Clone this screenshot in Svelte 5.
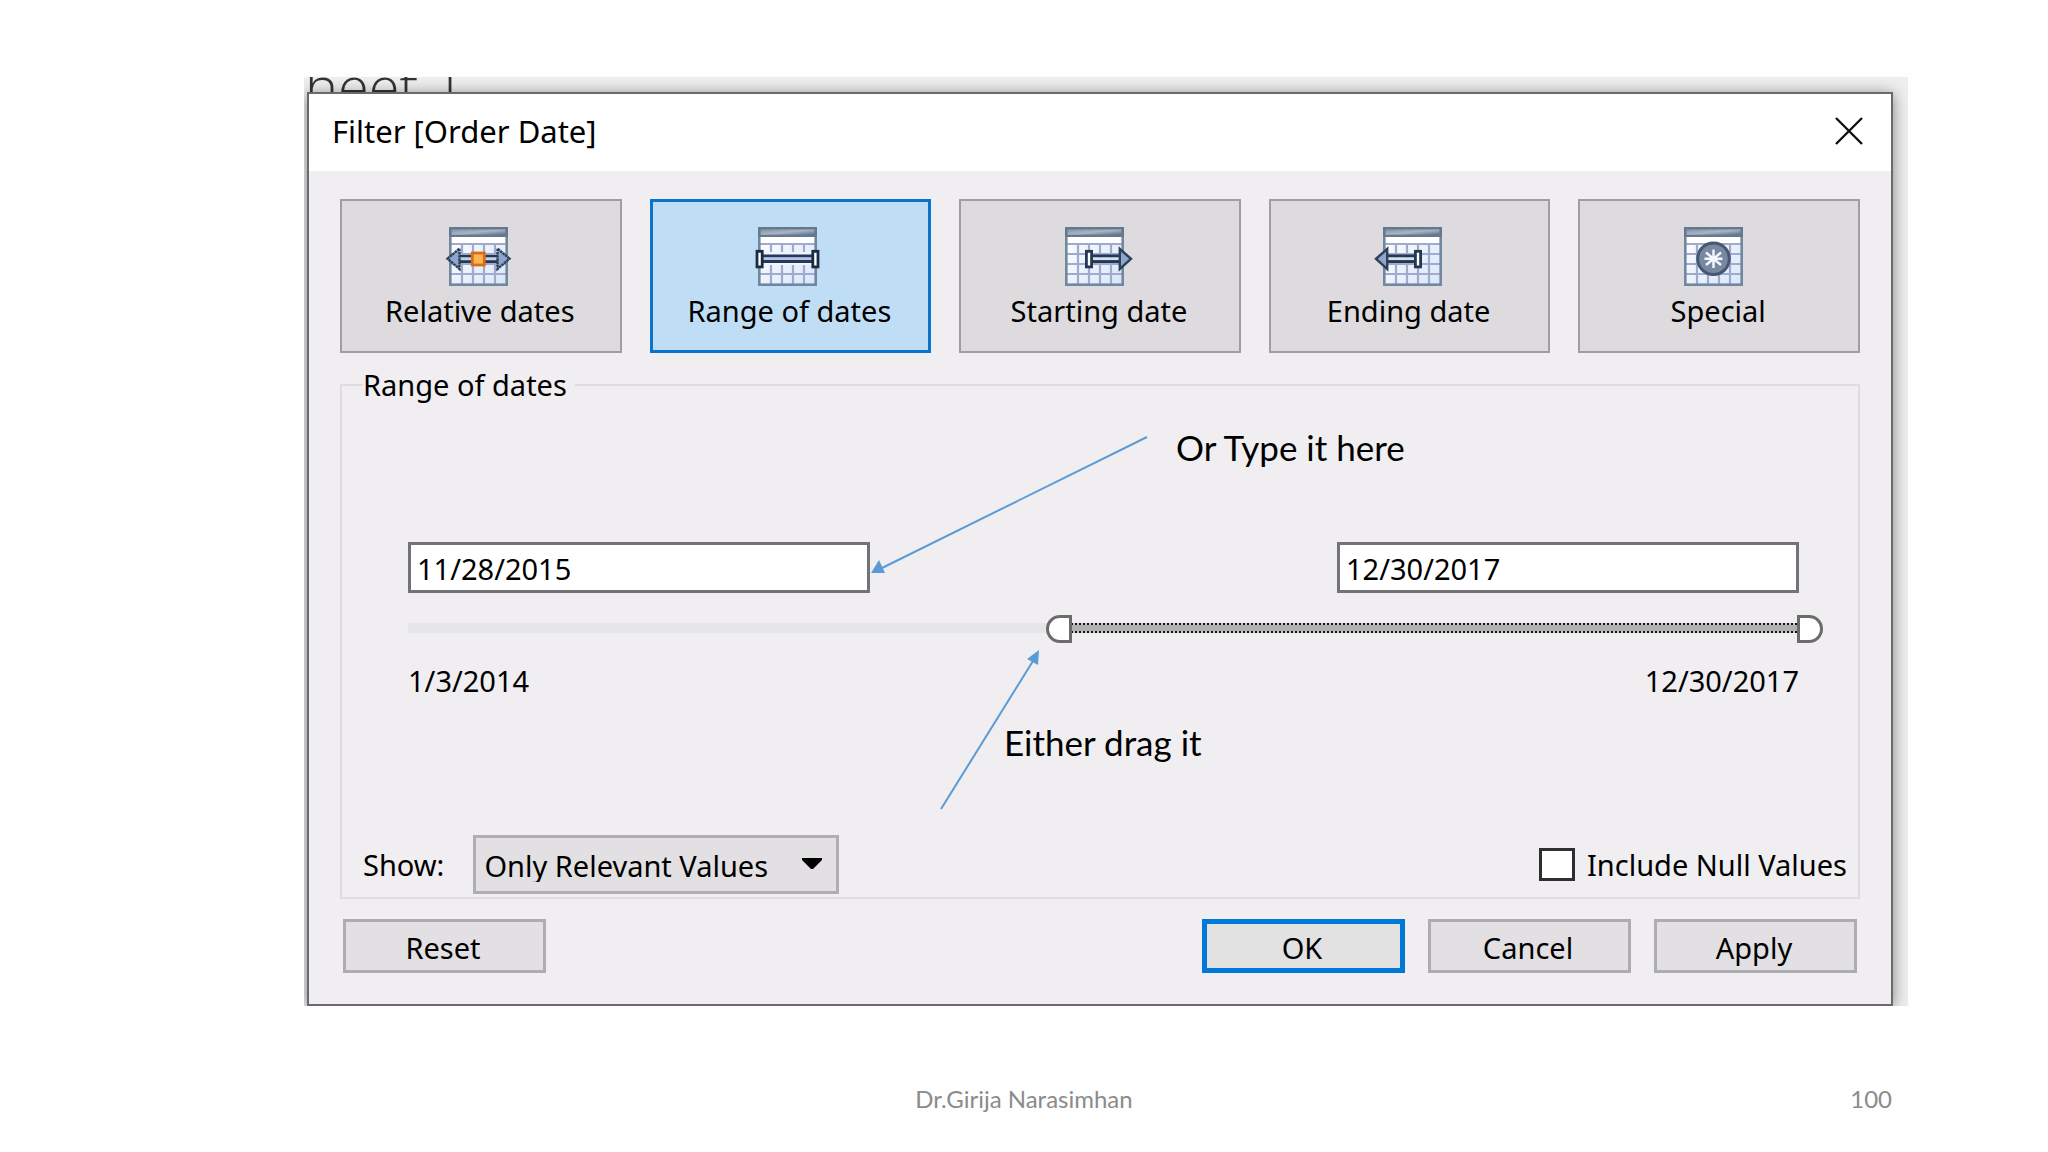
<script>
  const modes = [
    { id: "relative", label: "Relative dates", grid: 3 },
    { id: "range", label: "Range of dates", grid: 3 },
    { id: "starting", label: "Starting date", grid: 0 },
    { id: "ending", label: "Ending date", grid: 8 },
    { id: "special", label: "Special", grid: 0 },
  ];

  const DAY = 24 * 60 * 60 * 1000;
  const first = Date.UTC(2014, 0, 3);
  const span = (Date.UTC(2017, 11, 30) - first) / DAY;

  let mode = "range";
  let low = (Date.UTC(2015, 10, 28) - first) / DAY;
  let high = span;
  let show = "relevant";
  let includeNull = false;

  function format(days) {
    const d = new Date(first + days * DAY);
    return `${d.getUTCMonth() + 1}/${d.getUTCDate()}/${d.getUTCFullYear()}`;
  }

  function parse(text, fallback) {
    const [m, d, y] = text.split("/").map(Number);
    const days = (Date.UTC(y, m - 1, d) - first) / DAY;
    return days >= 0 && days <= span ? days : fallback;
  }

  function reset() {
    low = 0;
    high = span;
  }
</script>

<div class="slide">
  <div class="backdrop">
    <div class="sheet-title">heet 1</div>

    <div class="dialog" role="dialog" aria-labelledby="dialog-title">
      <header>
        <h1 id="dialog-title">Filter [Order Date]</h1>
        <button class="close" aria-label="Close">
          <svg width="30" height="28" viewBox="0 0 30 28">
            <path d="M2 1L28 27M28 1L2 27" stroke="#111" stroke-width="2.4" />
          </svg>
        </button>
      </header>

      <div class="body">
        <div class="modes">
          {#each modes as m}
            <button class="mode" class:selected={mode === m.id} on:click={() => (mode = m.id)}>
              <svg width="68" height="60" viewBox="0 0 68 60">
                <defs>
                  <linearGradient id="head-{m.id}" x1="0" y1="0" x2="1" y2="1">
                    <stop offset="0" stop-color="#8193a8" />
                    <stop offset="0.5" stop-color="#a9b4c4" />
                    <stop offset="1" stop-color="#5c7288" />
                  </linearGradient>
                  <linearGradient id="cells-{m.id}" x1="0" y1="0" x2="1" y2="1">
                    <stop offset="0" stop-color="#ffffff" />
                    <stop offset="1" stop-color="#d9e6fb" />
                  </linearGradient>
                </defs>
                <g transform="translate({m.grid} 0)">
                  <rect x="1.5" y="1.5" width="56" height="56" fill="url(#cells-{m.id})" />
                  <rect x="2" y="10" width="55" height="6" fill="#fff" />
                  <path d="M2 17H57M2 27H57M2 37H57M2 47H57M13 17V57M24 17V57M35 17V57M46 17V57" stroke="#9faacd" stroke-width="2.2" />
                  <rect x="1.3" y="1.3" width="56.4" height="56.4" fill="none" stroke="#71879f" stroke-width="2.6" />
                  <rect x="0" y="0" width="59" height="10" fill="#64798f" />
                  <rect x="2.6" y="2.4" width="53.8" height="5.4" fill="url(#head-{m.id})" />
                  {#if m.id === "relative"}
                    <path d="M10 27H50V36H10Z" fill="#c3d1e8" />
                    <path d="M10 29H50M10 34.6H50" stroke="#24384f" stroke-width="2.6" />
                    <path d="M-1.5 31.7L10.5 21.5V42ZM60.5 31.7L48.5 21.5V42Z" fill="#8ea6cd" stroke="#2c4058" stroke-width="2.4" stroke-dasharray="2.6 0.6" />
                    <rect x="23.3" y="26" width="12" height="12" fill="#ffb458" stroke="#dc6d12" stroke-width="2.8" />
                  {:else if m.id === "range"}
                    <rect x="2" y="25" width="55" height="13" fill="#eef3fc" />
                    <path d="M5 29H54M5 34.6H54" stroke="#24385a" stroke-width="3" />
                    <path d="M5 31.8H54" stroke="#b6c3e4" stroke-width="2.6" />
                    <rect x="-1" y="24.3" width="5.2" height="15.6" fill="#fff" stroke="#1c2c40" stroke-width="2.8" />
                    <rect x="54.8" y="24.3" width="5.2" height="15.6" fill="#fff" stroke="#1c2c40" stroke-width="2.8" />
                  {:else if m.id === "starting"}
                    <path d="M28 29H55M28 34.6H55" stroke="#24384f" stroke-width="3" />
                    <path d="M28 31.8H55" stroke="#d3def0" stroke-width="2.6" />
                    <path d="M54.8 22V42L66 31.8Z" fill="#8ea6cd" stroke="#2c4058" stroke-width="2.4" />
                    <rect x="21.4" y="24.3" width="5.2" height="15.6" fill="#fff" stroke="#24384f" stroke-width="2.8" />
                  {:else if m.id === "ending"}
                    <path d="M4 29H31M4 34.6H31" stroke="#24384f" stroke-width="3" />
                    <path d="M4 31.8H31" stroke="#d3def0" stroke-width="2.6" />
                    <path d="M4.2 22V42L-7 31.8Z" fill="#8ea6cd" stroke="#2c4058" stroke-width="2.4" />
                    <rect x="32.4" y="24.3" width="5.2" height="15.6" fill="#fff" stroke="#24384f" stroke-width="2.8" />
                  {:else}
                    <circle cx="29.5" cy="31.7" r="15.8" fill="#7788a0" stroke="#46586f" stroke-width="3" />
                    <path d="M29.5 22.5V41M22 25.5L37 38M37 25.5L22 38M20.5 31.7H38.5" stroke="#f4f8fd" stroke-width="2.4" />
                  {/if}
                </g>
              </svg>
              <span>{m.label}</span>
            </button>
          {/each}
        </div>

        <fieldset>
          <legend>Range of dates</legend>

          <div class="range">
            <div class="inputs">
              <input
                type="text"
                aria-label="Start date"
                value={format(low)}
                on:change={(e) => (low = parse(e.target.value, low))}
              />
              <input
                type="text"
                aria-label="End date"
                value={format(high)}
                on:change={(e) => (high = parse(e.target.value, high))}
              />
            </div>
            <div class="slider">
              <div class="track"></div>
              <div
                class="fill"
                style="left: {(low / span) * 100}%; right: {100 - (high / span) * 100}%"
              ></div>
              <input class="low" type="range" min="0" max={span} bind:value={low} aria-label="Range start" />
              <input class="high" type="range" min="0" max={span} bind:value={high} aria-label="Range end" />
            </div>
            <div class="limits">
              <span>{format(0)}</span>
              <span>{format(span)}</span>
            </div>
          </div>

          <div class="options">
            <label for="show">Show:</label>
            <div class="select">
              <select id="show" bind:value={show}>
                <option value="relevant">Only Relevant Values</option>
                <option value="all">All Values in Database</option>
              </select>
              <svg width="20" height="11" viewBox="0 0 20 11">
                <path d="M0 0H20V2L11 11H9L0 2Z" fill="#000" />
              </svg>
            </div>
            <label class="null">
              <input type="checkbox" bind:checked={includeNull} />
              Include Null Values
            </label>
          </div>

          <!-- callouts drawn over the panel -->
          <svg class="arrows" width="300" height="400" viewBox="0 0 300 400">
            <g stroke="#5b9bd5" stroke-width="2" fill="#5b9bd5">
              <path d="M277 13L12 144" />
              <path d="M1 149L9 136L15 149Z" stroke="none" />
              <path d="M71 385L163 237" />
              <path d="M169 226L168 241L157 235Z" stroke="none" />
            </g>
          </svg>
          <span class="note type-note">Or Type it here</span>
          <span class="note drag-note">Either drag it</span>
        </fieldset>

        <div class="actions">
          <button class="reset" on:click={reset}>Reset</button>
          <button class="primary">OK</button>
          <button>Cancel</button>
          <button>Apply</button>
        </div>
      </div>
    </div>
  </div>

  <footer>
    <span></span>
    <span>Dr.Girija Narasimhan</span>
    <span class="page">100</span>
  </footer>
</div>

<style>
  :global(body) {
    margin: 0;
    background: #fefefe;
  }

  .slide {
    box-sizing: border-box;
    min-height: 100vh;
    padding-top: 77px;
    font-family: "Noto Sans", "Open Sans", sans-serif;
    font-size: 29px;
    line-height: 32px;
    color: #000;
  }

  button,
  input,
  select {
    box-sizing: border-box;
    margin: 0;
    font: inherit;
    color: inherit;
    border-radius: 0;
  }

  .backdrop {
    position: relative;
    overflow: hidden;
    margin: 0 140px 0 304px;
    padding: 15px 15px 0 3px;
    background: #efeeef;
  }

  .sheet-title {
    position: absolute;
    top: -20px;
    left: 1px;
    font-family: "Open Sans", sans-serif;
    font-weight: 300;
    font-size: 56px;
    line-height: 56px;
    color: #333;
  }

  .dialog {
    position: relative;
    border: 2px solid #6a696b;
    background: #f0eef0;
    box-shadow: 0 2px 14px rgba(0, 0, 0, 0.45);
  }

  header {
    display: flex;
    align-items: center;
    justify-content: space-between;
    box-sizing: border-box;
    height: 77px;
    padding: 0 27px 3px 23px;
    background: #fff;
  }

  h1 {
    margin: 0;
    font-size: 31px;
    font-weight: 400;
    line-height: 32px;
  }

  .close {
    display: flex;
    padding: 0;
    border: none;
    background: none;
  }

  .body {
    padding: 28px 31px 31px;
  }

  .modes {
    display: grid;
    grid-template-columns: repeat(5, 1fr);
    gap: 28px;
  }

  .mode {
    display: flex;
    flex-direction: column;
    align-items: center;
    gap: 8px;
    height: 154px;
    padding: 26px 2px 0 0;
    border: 2px solid #9f9ea0;
    background: #dddbdd;
  }

  .mode svg {
    overflow: visible;
  }

  .mode.selected {
    border: 3px solid #0a73ce;
    padding-top: 25px;
    background: #c0ddf6;
  }

  fieldset {
    position: relative;
    min-width: 0;
    margin: 16px 0 0;
    padding: 141px 11px 3px 21px;
    border: 2px solid #dddcde;
  }

  legend {
    padding: 0 8px 0 0;
  }

  .range {
    padding: 0 48px 0 45px;
  }

  .inputs {
    display: flex;
    justify-content: space-between;
  }

  .inputs input {
    width: 462px;
    height: 51px;
    padding: 2px 6px 0;
    border: 3px solid #737274;
    background: #fff;
  }

  .slider {
    position: relative;
    height: 28px;
    margin-top: 22px;
  }

  .track,
  .fill {
    position: absolute;
    top: 8px;
    height: 10px;
  }

  .track {
    left: 0;
    right: 0;
    background: #e6e5e7;
  }

  .fill {
    background:
      repeating-linear-gradient(90deg, #111 0 2px, #c8c8c8 2px 4px) top / 100% 2px no-repeat,
      repeating-linear-gradient(90deg, #111 0 2px, #c8c8c8 2px 4px) bottom / 100% 2px no-repeat,
      #b0b0b0;
  }

  .slider input {
    position: absolute;
    top: 0;
    height: 28px;
    appearance: none;
    background: none;
    pointer-events: none;
  }

  .slider .low {
    left: -24px;
    width: calc(100% + 24px);
  }

  .slider .high {
    left: 0;
    width: calc(100% + 24px);
  }

  .slider input::-webkit-slider-thumb {
    box-sizing: border-box;
    appearance: none;
    width: 26px;
    height: 28px;
    border: 3px solid #6b6b6b;
    border-radius: 14px 0 0 14px;
    background: #fff;
    pointer-events: auto;
  }

  .slider .high::-webkit-slider-thumb {
    border-radius: 0 14px 14px 0;
  }

  .limits {
    display: flex;
    justify-content: space-between;
    margin-top: 22px;
  }

  .options {
    display: flex;
    align-items: center;
    margin-top: 138px;
  }

  .select {
    position: relative;
    margin-left: 29px;
  }

  .select select {
    width: 366px;
    height: 59px;
    padding: 2px 8px 0;
    appearance: none;
    border: 3px solid #afaeb0;
    background: #e2e0e2;
  }

  .select svg {
    position: absolute;
    top: 23px;
    right: 17px;
    pointer-events: none;
  }

  .null {
    display: flex;
    align-items: center;
    gap: 12px;
    margin-left: auto;
  }

  .null input {
    width: 36px;
    height: 33px;
    appearance: none;
    border: 3px solid #2f2e30;
    background: #fff;
  }

  .null input:checked {
    background: #2f2e30;
    box-shadow: inset 0 0 0 4px #fff;
  }

  .arrows {
    position: absolute;
    top: 23px;
    left: 528px;
    pointer-events: none;
  }

  .note {
    position: absolute;
    font-family: Lato, sans-serif;
    font-size: 35px;
    line-height: 40px;
    white-space: nowrap;
  }

  .type-note {
    top: 26px;
    left: 834px;
  }

  .drag-note {
    top: 321px;
    left: 662px;
  }

  .actions {
    display: flex;
    gap: 23px;
    margin-top: 20px;
    padding: 0 3px;
  }

  .actions button {
    width: 203px;
    height: 54px;
    padding: 3px 3px 0 0;
    border: 3px solid #adacae;
    background: #e2e0e2;
  }

  .actions .reset {
    margin-right: auto;
  }

  .actions .primary {
    border: 5px solid #0078d7;
    background: #e1e2e1;
  }

  footer {
    display: grid;
    grid-template-columns: 1fr auto 1fr;
    margin-top: 77px;
    padding: 0 156px;
    font-family: Lato, sans-serif;
    font-size: 24px;
    color: #8b8b8b;
  }

  .page {
    text-align: right;
  }
</style>
